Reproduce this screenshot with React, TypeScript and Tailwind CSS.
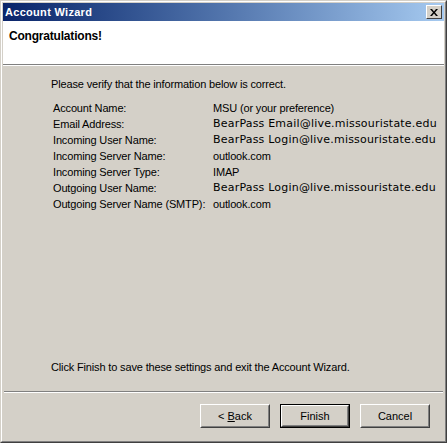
const ui = { fontFamily: '"Liberation Sans", Arial, sans-serif' };
const wide = { fontFamily: '"DejaVu Sans", Verdana, sans-serif', letterSpacing: "0.2px" };

const rows: [string, string, boolean?][] = [
  ["Account Name:", "MSU (or your preference)"],
  ["Email Address:", "BearPass Email@live.missouristate.edu", true],
  ["Incoming User Name:", "BearPass Login@live.missouristate.edu", true],
  ["Incoming Server Name:", "outlook.com"],
  ["Incoming Server Type:", "IMAP"],
  ["Outgoing User Name:", "BearPass Login@live.missouristate.edu", true],
  ["Outgoing Server Name (SMTP):", "outlook.com"],
];

function Btn({ children, def }: { children: React.ReactNode; def?: boolean }) {
  const inner = (
    <div className="border border-t-white border-l-white border-r-[#404040] border-b-[#404040] h-full">
      <div className="h-full border border-transparent border-r-[#808080] border-b-[#808080] flex items-center justify-center text-[11px] text-black">
        {children}
      </div>
    </div>
  );
  if (def)
    return <div className="w-[70px] h-[24px] border border-black">{inner}</div>;
  return <div className="w-[70px] h-[24px]">{inner}</div>;
}

export default function App() {
  return (
    <div className="w-[447px] h-[443px] bg-[#d4d0c8]" style={ui}>
      <div className="h-full border border-t-[#d4d0c8] border-l-[#d4d0c8] border-r-[#404040] border-b-[#404040]">
        <div className="h-full border border-t-white border-l-white border-r-[#808080] border-b-[#808080] p-px flex flex-col">
          {/* title bar */}
          <div className="h-[18px] shrink-0 flex items-center justify-between pl-[2px] pr-[2px] bg-gradient-to-r from-[#0a246a] to-[#a6caf0]">
            <span className="text-white font-bold text-[11px] leading-none tracking-[0.3px]">Account Wizard</span>
            <div className="w-[16px] h-[14px] bg-[#d4d0c8] border border-t-white border-l-white border-r-[#404040] border-b-[#404040] flex items-center justify-center">
              <svg width="8" height="7" viewBox="0 0 8 7">
                <path d="M0 0h2l2 2.5L6 0h2L5 3.5 8 7H6L4 4.5 2 7H0l3-3.5z" fill="#000" />
              </svg>
            </div>
          </div>

          {/* header */}
          <div className="h-[44px] shrink-0 bg-white border-b border-b-[#808080] flex items-start pt-[6px] pl-[6px]">
            <span className="font-bold text-[12px] text-black tracking-[-0.2px]">Congratulations!</span>
          </div>
          <div className="h-px bg-white shrink-0" />

          {/* body */}
          <div className="flex-1 flex flex-col pl-[48px] pt-[10px] text-[11px] text-black tracking-[-0.15px]">
            <div className="leading-[16px]">Please verify that the information below is correct.</div>
            <div className="mt-[8px] pl-[2px] grid grid-cols-[160px_1fr] auto-rows-[16px] items-center">
              {rows.map(([k, v, w]) => (
                <div key={k} className="contents">
                  <span>{k}</span>
                  <span style={w ? wide : undefined}>{v}</span>
                </div>
              ))}
            </div>
            <div className="mt-auto mb-[16px] leading-[16px]">
              Click Finish to save these settings and exit the Account Wizard.
            </div>
          </div>

          <div className="h-px bg-[#808080] shrink-0 mx-[1px]" />
          <div className="h-px bg-white shrink-0 mx-[1px]" />

          {/* buttons */}
          <div className="h-[47px] shrink-0 flex justify-end items-start pt-[11px] pr-[14px] gap-[10px]">
            <Btn>
              &lt; <span className="underline ml-[3px]">B</span>ack
            </Btn>
            <Btn def>Finish</Btn>
            <Btn>Cancel</Btn>
          </div>
        </div>
      </div>
    </div>
  );
}
